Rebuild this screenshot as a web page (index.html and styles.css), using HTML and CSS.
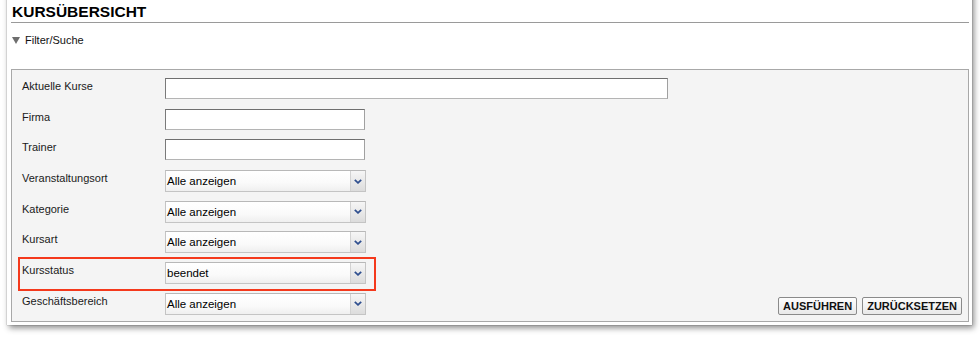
FILE: index.html
```html
<!DOCTYPE html>
<html lang="de">
<head>
<meta charset="utf-8">
<title>Kursübersicht</title>
<link rel="stylesheet" href="styles.css">
</head>
<body>
<div class="window">
  <h1 class="title">KURSÜBERSICHT</h1>
  <div class="toggle">
    <svg class="tri" width="8" height="7" viewBox="0 0 8 7"><path d="M0 0H8L4 7Z" fill="#6e6e6e"/></svg>
    <span>Filter/Suche</span>
  </div>
  <form class="box">
    <div class="row">
      <label class="label">Aktuelle Kurse</label>
      <input class="text wide" type="text">
    </div>
    <div class="row">
      <label class="label">Firma</label>
      <input class="text" type="text">
    </div>
    <div class="row">
      <label class="label">Trainer</label>
      <input class="text" type="text">
    </div>
    <div class="row">
      <label class="label">Veranstaltungsort</label>
      <div class="select"><span class="val">Alle anzeigen</span><span class="arrow"><svg width="8" height="5" viewBox="0 0 8 5"><path d="M0.8 0.8L4 3.8L7.2 0.8" fill="none" stroke="#2f4f8f" stroke-width="1.8"/></svg></span></div>
    </div>
    <div class="row">
      <label class="label">Kategorie</label>
      <div class="select"><span class="val">Alle anzeigen</span><span class="arrow"><svg width="8" height="5" viewBox="0 0 8 5"><path d="M0.8 0.8L4 3.8L7.2 0.8" fill="none" stroke="#2f4f8f" stroke-width="1.8"/></svg></span></div>
    </div>
    <div class="row">
      <label class="label">Kursart</label>
      <div class="select"><span class="val">Alle anzeigen</span><span class="arrow"><svg width="8" height="5" viewBox="0 0 8 5"><path d="M0.8 0.8L4 3.8L7.2 0.8" fill="none" stroke="#2f4f8f" stroke-width="1.8"/></svg></span></div>
    </div>
    <div class="row highlight">
      <label class="label">Kursstatus</label>
      <div class="select"><span class="val">beendet</span><span class="arrow"><svg width="8" height="5" viewBox="0 0 8 5"><path d="M0.8 0.8L4 3.8L7.2 0.8" fill="none" stroke="#2f4f8f" stroke-width="1.8"/></svg></span></div>
    </div>
    <div class="row last">
      <label class="label">Geschäftsbereich</label>
      <div class="select"><span class="val">Alle anzeigen</span><span class="arrow"><svg width="8" height="5" viewBox="0 0 8 5"><path d="M0.8 0.8L4 3.8L7.2 0.8" fill="none" stroke="#2f4f8f" stroke-width="1.8"/></svg></span></div>
      <div class="buttons">
        <button type="button" class="btn">AUSFÜHREN</button>
        <button type="button" class="btn">ZURÜCKSETZEN</button>
      </div>
    </div>
  </form>
</div>
</body>
</html>
```

FILE: styles.css
```css
* { box-sizing: border-box; }
html, body { margin: 0; padding: 0; background: #fff; }
body {
  font-family: "Liberation Sans", Arial, sans-serif;
  color: #111;
  width: 980px;
  height: 338px;
  overflow: hidden;
}
.window {
  margin: -10px 0 0 7px;
  width: 965px;
  padding: 13px 3px 3px 4px;
  background: #fff;
  box-shadow: 0 0 1px rgba(0,0,0,0.5), 2px 3px 6px rgba(0,0,0,0.45);
}
.title {
  margin: 0;
  padding: 0 0 2px 1px;
  font-size: 15.5px;
  line-height: 17px;
  font-weight: bold;
  color: #000;
  border-bottom: 1px solid #9a9a9a;
}
.toggle {
  margin-top: 11px;
  padding-left: 1px;
  display: flex;
  align-items: center;
  font-size: 11px;
  line-height: 13px;
  color: #111;
}
.tri { margin-right: 5px; margin-top: -1px; }
.box {
  margin: 22px 0 0;
  border: 1px solid #a8a8a8;
  background: #f4f4f4;
  padding: 8px 6px 6px 0;
}
.row {
  display: flex;
  align-items: flex-start;
  height: 30.7px;
  position: relative;
}
.row.last { height: 22px; }
.label {
  width: 153px;
  flex: none;
  padding: 2px 0 0 10px;
  font-size: 11px;
  line-height: 13px;
  color: #1a1a1a;
}
.text {
  width: 200px;
  height: 21px;
  margin: 0;
  border: 1px solid;
  border-color: #6f6f6f #a0a0a0 #b4b4b4 #7a7a7a;
  background: #fff;
  font: 11px "Liberation Sans", Arial, sans-serif;
}
.text.wide { width: 503px; }
.select {
  width: 201px;
  height: 22px;
  display: flex;
  border: 1px solid #c4c4c4;
  border-top-color: #b8b8b8;
  background: linear-gradient(#fff, #fafafa 60%, #efefef);
}
.val {
  flex: 1;
  padding-left: 1px;
  font-size: 11.5px;
  line-height: 20px;
  color: #000;
}
.arrow {
  width: 15px;
  flex: none;
  display: flex;
  align-items: center;
  justify-content: center;
  border-left: 1px solid #d2d2d2;
  background: linear-gradient(#f6f6f6, #dcdcdc);
}
.highlight::after {
  content: "";
  position: absolute;
  left: 6px;
  top: -5px;
  width: 354px;
  height: 30px;
  border: 2px solid #f4391c;
  pointer-events: none;
}
.buttons {
  margin-left: auto;
  align-self: flex-end;
  display: flex;
  gap: 5px;
}
.btn {
  height: 18px;
  margin: 0;
  padding: 0 4px;
  border: 1px solid #8a8a8a;
  border-radius: 2px;
  background: linear-gradient(#fdfdfd, #e9e9e9);
  font: bold 11px/16px "Liberation Sans", Arial, sans-serif;
  color: #111;
}
```
